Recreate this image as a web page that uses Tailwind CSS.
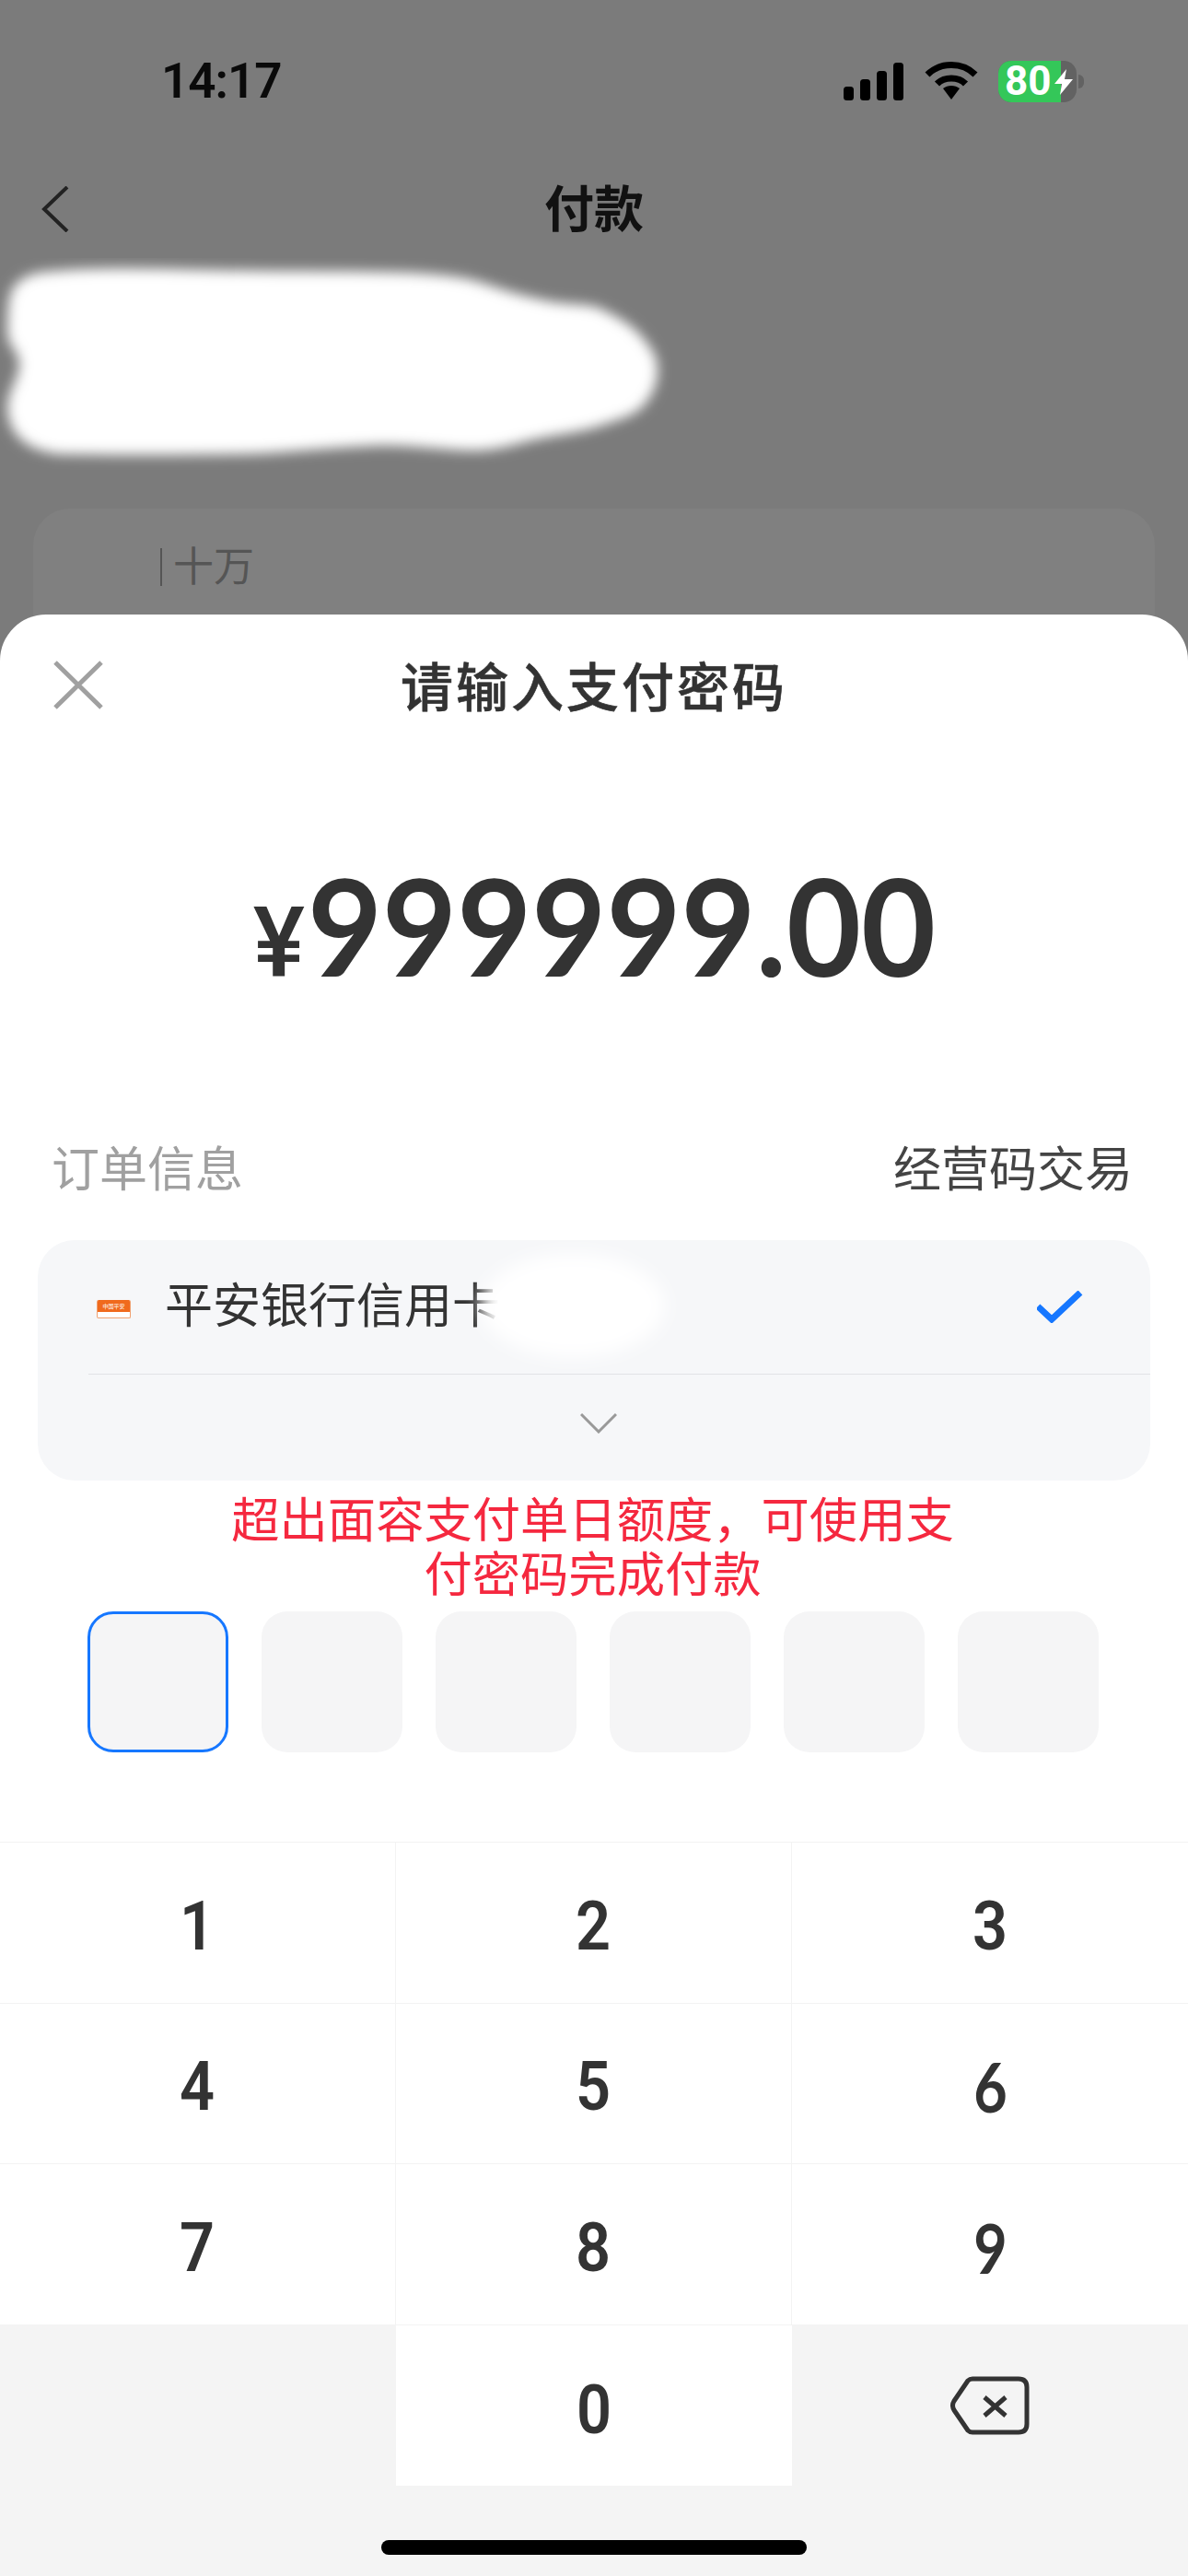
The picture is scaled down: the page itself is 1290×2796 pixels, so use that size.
<!DOCTYPE html>
<html lang="zh">
  <head>
    <meta charset="utf-8" />
    <title>付款</title>
    <script src="https://cdn.jsdelivr.net/npm/@tailwindcss/browser@4"></script>
  </head>

  <body class="w-[1290px] h-[2796px] overflow-hidden relative bg-[#7b7b7b] font-['Roboto','Noto_Sans_CJK_SC',sans-serif]">
    <!-- page behind the sheet -->
    <div class="flex items-center justify-between h-[176px] pl-[175px] pr-[113px]">
      <span class="text-[53px] leading-none font-semibold tracking-[-1px] text-[#0a0a0a]">14:17</span>
      <div class="flex items-center gap-[23px]">
        <svg width="65" height="41" viewBox="0 0 65 41" fill="#000">
          <rect x="0" y="26" width="11" height="15" rx="3.5" />
          <rect x="18" y="18" width="11" height="23" rx="3.5" />
          <rect x="36" y="9" width="11" height="32" rx="3.5" />
          <rect x="54" y="0" width="11" height="41" rx="3.5" />
        </svg>
        <svg width="58" height="42" viewBox="0 0 58 42" fill="none" stroke="#000" stroke-width="7">
          <path d="M3 14 C17 0 41 0 55 14" />
          <path d="M13.500 24 C21 16 37 16 44.500 24" />
          <path d="M20 29 L29 41 L38 29 C33 25 25 25 20 29 Z" fill="#000" stroke="none" />
        </svg>
        <div class="relative flex items-center ml-[-1px] mr-[8px]">
          <div class="relative w-[85px] h-[45px] rounded-[14px] bg-[#626262]">
            <div class="w-[68px] h-full rounded-l-[14px] bg-[#34c759]"></div>
            <span class="absolute left-[7px] top-0 text-[44px] leading-[45px] font-bold text-white">80</span>
            <svg class="absolute left-[61px] top-[9px]" width="20" height="28" viewBox="0 0 20 28" fill="#fff">
              <path d="M13 0 L0 16 H8 L6 28 L20 11 H11 Z" />
            </svg>
          </div>
          <div class="absolute right-[-8px] w-[6px] h-[15px] rounded-r-full bg-[#626262]"></div>
        </div>
      </div>
    </div>

    <div class="grid grid-cols-[1fr_auto_1fr] items-center h-[102px] px-[45px]">
      <svg width="30" height="50" viewBox="0 0 30 50" fill="none" stroke="#222" stroke-width="4">
        <path d="M28 1 L3 25 L28 49" />
      </svg>
      <div class="text-[54px] leading-none font-bold text-[#111] mt-[3px]">付款</div>
    </div>

    <svg class="absolute left-0 top-[280px]" width="740" height="230" viewBox="0 280 740 230">
      <filter id="soft" x="-5%" y="-10%" width="110%" height="120%">
        <feGaussianBlur stdDeviation="7" />
      </filter>
      <path filter="url(#soft)" fill="#fff" d="M49 295 C90 291 130 291 181 292 C300 296 400 293 461 297 C490 299 510 302 527 308 C555 318 580 324 602 328 C625 331 642 330 652 335 C676 346 691 357 699 368 C712 384 714 392 714 402 C714 420 706 432 697 442 C686 452 672 455 658 460 C630 470 600 472 576 478 C555 484 530 490 510 489 C475 488 440 482 403 484 C350 486 300 493 247 493 C190 494 120 494 66 493 C40 490 25 482 16 469 C10 460 8 450 8 442 C8 425 21 410 21 395 C21 382 8 375 8 362 C8 345 8 330 12 317 C18 303 32 297 49 295 Z" />
    </svg>

    <div class="mt-[274px] mx-[36px] h-[200px] rounded-[40px] bg-[#808080] pl-[138px] pt-[43px] flex items-start">
      <span class="w-[2px] h-[41px] bg-[#555] mr-[12px]"></span>
      <span class="text-[44px] leading-[41px] text-[#555] mt-[1px]">十万</span>
    </div>

    <!-- password sheet -->
    <div class="absolute inset-x-0 top-[667px] bottom-0 bg-white rounded-t-[50px] flex flex-col">
      <div class="relative flex items-center justify-center h-[156px] pt-[5px]">
        <svg class="absolute left-[58px] top-[50px]" width="54" height="53" viewBox="0 0 54 53" fill="none" stroke="#a0a0a0" stroke-width="5">
          <path d="M2 2 L52 51 M52 2 L2 51" />
        </svg>
        <span class="text-[57px] leading-none font-medium tracking-[3px] text-[#333] [-webkit-text-stroke:0.6px_#333]">请输入支付密码</span>
      </div>

      <div class="flex items-baseline justify-center h-[370px] pt-[106px] pl-[16px]">
        <span class="text-[106px] leading-[150px] font-medium text-[#333] mr-[-12px]">¥</span>
        <span class="inline-block scale-x-[0.958] text-[146px] leading-[150px] font-bold text-[#333] font-['Lato','Roboto',sans-serif]">999999.00</span>
      </div>

      <div class="flex items-center justify-between h-[150px] pt-[5px] pl-[56px] pr-[60px]">
        <span class="text-[52px] leading-none text-[#a0a0a0]">订单信息</span>
        <span class="text-[52px] leading-none text-[#444]">经营码交易</span>
      </div>

      <div class="relative mt-[3px] mx-[41px] h-[261px] rounded-[40px] bg-[#f6f7f9] overflow-hidden">
        <div class="flex items-center justify-between h-[145px] pl-[64px] pr-[73px]">
          <div class="flex items-center">
            <div class="w-[37px] h-[20px] rounded-[2px] overflow-hidden border-x border-b border-[#f0a070] bg-white mt-[4px]">
              <div class="h-[13px] bg-[#f06a1d] text-[6px] leading-[13px] text-center text-white whitespace-nowrap">中国平安</div>
            </div>
            <span class="ml-[37px] text-[52px] leading-none text-[#333]">平安银行信用卡</span>
          </div>
          <svg width="50" height="35" viewBox="0 0 50 35" fill="none" stroke="#1677ff" stroke-width="7">
            <path d="M1 17 L16 31 L47 2" />
          </svg>
        </div>
        <div class="ml-[55px] h-[1px] bg-[#e2e3e6]"></div>
        <div class="flex items-center justify-center h-[115px] pb-[10px] pl-[10px]">
          <svg width="40" height="22" viewBox="0 0 40 22" fill="none" stroke="#999" stroke-width="3">
            <path d="M1 1 L20 20 L39 1" />
          </svg>
        </div>
        <svg class="absolute left-[420px] top-0" width="320" height="150" viewBox="0 0 320 150">
          <filter id="softer" x="-20%" y="-30%" width="140%" height="160%">
            <feGaussianBlur stdDeviation="9" />
          </filter>
          <ellipse filter="url(#softer)" cx="161" cy="71" rx="100" ry="56" fill="#fff" />
        </svg>
      </div>

      <div class="mt-[15px] pr-[3px] text-center text-[52.300px] leading-[59px] text-[#f5283f]">
        超出面容支付单日额度，可使用支<br />付密码完成付款
      </div>

      <div class="flex gap-[36px] mt-[9px] pl-[95px]">
        <div class="w-[153px] h-[153px] rounded-[28px] bg-[#f5f5f6] border-[3px] border-[#1677ff]"></div>
        <div class="w-[153px] h-[153px] rounded-[28px] bg-[#f5f5f6]"></div>
        <div class="w-[153px] h-[153px] rounded-[28px] bg-[#f5f5f6]"></div>
        <div class="w-[153px] h-[153px] rounded-[28px] bg-[#f5f5f6]"></div>
        <div class="w-[153px] h-[153px] rounded-[28px] bg-[#f5f5f6]"></div>
        <div class="w-[153px] h-[153px] rounded-[28px] bg-[#f5f5f6]"></div>
      </div>

      <div class="mt-[97px] flex-1 bg-[#f4f4f4]">
        <div class="grid grid-cols-3 auto-rows-[174.5px] border-t border-[#f3f3f3] text-[74px] font-semibold text-[#333]">
          <div class="flex items-center justify-center pt-[7px] bg-white border-r border-b border-[#f3f3f3]"><span class="scale-x-[0.9]">1</span></div>
          <div class="flex items-center justify-center pt-[7px] bg-white border-r border-b border-[#f3f3f3]"><span class="scale-x-[0.9]">2</span></div>
          <div class="flex items-center justify-center pt-[7px] bg-white border-b border-[#f3f3f3]"><span class="scale-x-[0.9]">3</span></div>
          <div class="flex items-center justify-center pt-[7px] bg-white border-r border-b border-[#f3f3f3]"><span class="scale-x-[0.9]">4</span></div>
          <div class="flex items-center justify-center pt-[7px] bg-white border-r border-b border-[#f3f3f3]"><span class="scale-x-[0.9]">5</span></div>
          <div class="flex items-center justify-center pt-[7px] bg-white border-b border-[#f3f3f3]"><span class="scale-x-[0.85] font-bold font-['Lato',sans-serif]">6</span></div>
          <div class="flex items-center justify-center pt-[7px] bg-white border-r border-b border-[#f3f3f3]"><span class="scale-x-[0.9]">7</span></div>
          <div class="flex items-center justify-center pt-[7px] bg-white border-r border-b border-[#f3f3f3]"><span class="scale-x-[0.9]">8</span></div>
          <div class="flex items-center justify-center pt-[7px] bg-white border-b border-[#f3f3f3]"><span class="scale-x-[0.85] font-bold font-['Lato',sans-serif]">9</span></div>
          <div></div>
          <div class="flex items-center justify-center pt-[9px] bg-white"><span class="scale-x-[0.9]">0</span></div>
          <div class="flex items-center justify-center">
            <svg width="86" height="64" viewBox="0 0 86 64" fill="none" stroke="#333" stroke-width="5" stroke-linejoin="round">
              <path d="M24 3 H74 Q83 3 83 12 V52 Q83 61 74 61 H24 Q21 61 19 59 L4 37 Q1 32 4 27 L19 5 Q21 3 24 3 Z" />
              <path d="M37 23 L60 43 M60 23 L37 43" />
            </svg>
          </div>
        </div>
        <div class="mt-[59px] mx-auto w-[462px] h-[16px] rounded-full bg-black"></div>
      </div>
    </div>
  </body>
</html>
